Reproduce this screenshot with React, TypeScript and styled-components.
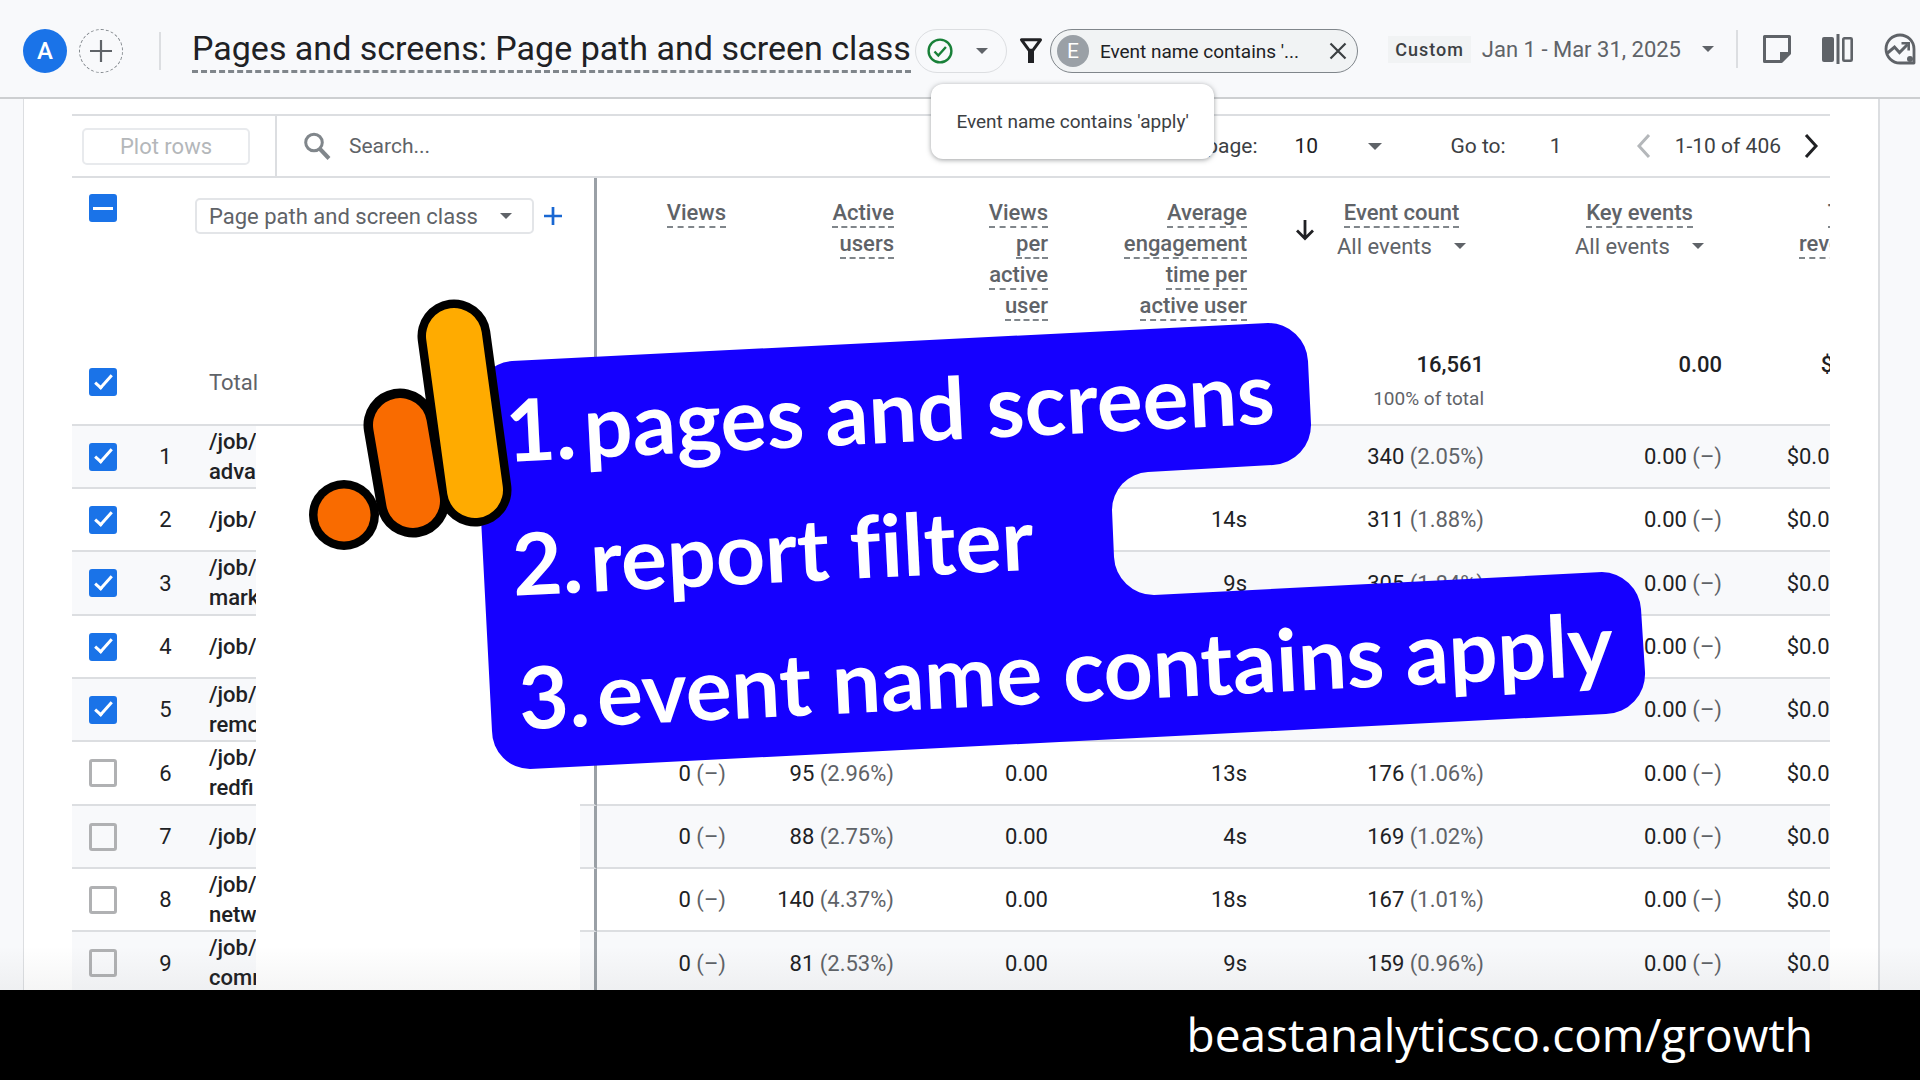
import React from "react";
import styled, { createGlobalStyle, css } from "styled-components";

const ink = "#202124";
const grey = "#5f6368";
const line = "#dcdee1";
const wash = "#f8f9fb";
const blue = "#1a73e8";

const GlobalStyle = createGlobalStyle`
  *, *::before, *::after { box-sizing: border-box; }
  body { margin: 0; background: ${wash}; }
  button, input, select { font: inherit; color: inherit; margin: 0; }
`;

const Page = styled.div`
  display: flex;
  flex-direction: column;
  position: relative;
  height: 100vh;
  overflow: hidden;
  font-family: Roboto, "Liberation Sans", sans-serif;
  font-size: 21px;
  line-height: 31px;
  color: ${ink};
`;

/* ---------- header ---------- */

const Header = styled.header`
  display: flex;
  align-items: center;
  flex: none;
  padding: 29px 4px 24px 23px;
  background: ${wash};
  border-bottom: 2px solid #cdcfd1;
  white-space: nowrap;
`;

const Round = styled.button<{ $dashed?: boolean }>`
  display: grid;
  place-items: center;
  flex: none;
  width: 44px;
  height: 44px;
  padding: 0;
  border-radius: 50%;
  font-size: 24px;
  font-weight: 500;
  color: #fff;
  background: ${blue};
  border: 0;
  ${(p) =>
    p.$dashed &&
    css`
      margin-left: 12px;
      background: none;
      color: ${grey};
      border: 1px dashed #80868b;
    `}
`;

const Rule = styled.span<{ $left: number; $right: number }>`
  flex: none;
  width: 2px;
  height: 38px;
  margin: 0 ${(p) => p.$right}px 0 ${(p) => p.$left}px;
  background: ${line};
`;

const Title = styled.h1`
  margin: 0;
  padding-bottom: 3px;
  border-bottom: 3px dashed #80868b;
  font-size: 34px;
  line-height: 38px;
  font-weight: 400;
`;

const StatusButton = styled.button`
  display: flex;
  align-items: center;
  justify-content: space-between;
  flex: none;
  width: 92px;
  height: 44px;
  margin: 0 12px 0 4px;
  padding: 0 18px 0 11px;
  border: 1px solid ${line};
  border-radius: 22px;
  background: none;
`;

const FilterArea = styled.div`
  display: flex;
  align-items: center;
  gap: 7px;
  position: relative;
`;

const Chip = styled.div`
  display: flex;
  align-items: center;
  width: 308px;
  height: 44px;
  padding: 0 10px 0 6px;
  border: 1px solid #80868b;
  border-radius: 22px;
  background: #f1f3f4;
  font-size: 19px;
`;

const ChipLetter = styled.span`
  display: grid;
  place-items: center;
  width: 32px;
  height: 32px;
  margin-right: 11px;
  border-radius: 50%;
  background: #9aa0a6;
  color: #fff;
  font-size: 21px;
`;

const PlainButton = styled.button`
  display: inline-flex;
  align-items: center;
  flex: none;
  padding: 0;
  border: 0;
  background: none;
`;

const ChipText = styled.span`
  flex: 1;
`;

const Tooltip = styled.div`
  position: absolute;
  top: 55px;
  right: 144px;
  z-index: 3;
  padding: 22px 25px;
  border-radius: 12px;
  background: #fff;
  box-shadow: 0 1px 5px rgba(60, 64, 67, 0.5);
  font-size: 19px;
  color: #3c4043;
`;

const HeaderEnd = styled.div`
  display: flex;
  align-items: center;
  margin-left: auto;
  padding-bottom: 4px;
`;

const DateButton = styled(PlainButton)`
  gap: 21px;
  color: ${grey};
  font-size: 22px;
`;

const Tag = styled.span`
  margin-right: 11px;
  padding: 0 7px;
  background: #f1f3f4;
  font-size: 18px;
  line-height: 27px;
  font-weight: 500;
  letter-spacing: 1px;
  color: #3c4043;
`;

const HeaderIcons = styled.div`
  display: flex;
  gap: 30px;
`;

/* ---------- report card ---------- */

const Main = styled.main`
  flex: 1;
  min-height: 0;
  position: relative;
  overflow: hidden;
  padding: 0 40px 0 23px;
`;

const Card = styled.section`
  min-height: 100%;
  padding: 15px 48px 0;
  background: #fff;
  border: solid ${line};
  border-width: 0 2px 0 1px;
`;

const Toolbar = styled.div`
  display: flex;
  align-items: center;
  height: 64px;
  border: solid ${line};
  border-width: 2px 0;
`;

const PlotCell = styled.div`
  display: flex;
  align-items: center;
  align-self: stretch;
  padding: 0 25px 0 10px;
  border-right: 2px solid ${line};
`;

const PlotButton = styled.button`
  width: 168px;
  height: 37px;
  padding: 0;
  border: 2px solid #e8eaed;
  border-radius: 5px;
  background: none;
  font-size: 22px;
  line-height: 31px;
  color: #b4b7ba;
`;

const SearchLabel = styled.label`
  display: flex;
  align-items: center;
  gap: 18px;
  flex: 1;
  padding-left: 26px;
  color: ${grey};
`;

const SearchInput = styled.input`
  flex: 1;
  min-width: 0;
  padding: 0;
  border: 0;
  outline: 0;
  background: none;
  &::placeholder { color: ${grey}; opacity: 1; }
`;

const Pager = styled.div`
  display: flex;
  align-items: center;
  padding-right: 11px;
  color: #3c4043;
`;

const SelectBox = styled.span`
  display: inline-flex;
  align-items: center;
  & select {
    appearance: none;
    padding: 0;
    border: 0;
    outline: 0;
    background: none;
  }
  & svg { flex: none; pointer-events: none; }
`;

const RowsSelect = styled(SelectBox)`
  gap: 50px;
  margin: 0 68px 0 37px;
  color: ${ink};
`;

const GoInput = styled.input`
  width: 86px;
  padding: 0;
  margin-left: 44px;
  border: 0;
  outline: 0;
  background: none;
`;

const Range = styled.span`
  margin: 0 23px 0 24px;
`;

/* ---------- table ---------- */

const TableClip = styled.div`
  overflow: hidden;
`;

const Table = styled.table`
  width: calc(100% + 63px);
  table-layout: fixed;
  border-collapse: separate;
  border-spacing: 0;
  font-size: 22px;
`;

const Col = styled.col<{ $w?: number }>`
  width: ${(p) => (p.$w ? `${p.$w}px` : "auto")};
`;

const HeadRow = styled.tr`
  height: 162px;
  vertical-align: top;
`;

const TotalRow = styled.tr`
  height: 86px;
  & > * { border-bottom: 2px solid ${line}; }
`;

const Row = styled.tr`
  height: 63px;
  & > * { border-bottom: 2px solid ${line}; }
  &:nth-child(odd) { background: ${wash}; }
  &:nth-child(3n) { height: 64px; }
`;

const Cell = styled.td`
  padding: 0 16px 0 0;
  text-align: right;
  white-space: nowrap;
`;

const CheckCell = styled.td<{ $top?: boolean }>`
  padding: ${(p) => (p.$top ? "16px 0 0 17px" : "0 0 0 17px")};
  line-height: 0;
`;

const NumberCell = styled.td`
  padding: 0;
  text-align: center;
`;

const PathCell = styled.th`
  padding: 0 0 0 12px;
  overflow: hidden;
  text-align: left;
  font-weight: 500;
  white-space: nowrap;
  line-height: 30px;
`;

const TotalCell = styled.th`
  padding: 0 0 0 12px;
  text-align: left;
  font-weight: 400;
  color: ${grey};
`;

const Blank = styled.td`
  padding: 0;
  background: #fff;
  tr > & { border-color: #fff; }
`;

const Edge = styled.td`
  padding: 0;
  border-right: 3px solid #9aa0a6;
`;

const MetricHead = styled.th`
  padding: 19px 16px 0 0;
  text-align: right;
  font-weight: 500;
  white-space: nowrap;
  color: ${grey};
`;

const Dotted = styled.span`
  padding-bottom: 1px;
  border-bottom: 2px dashed #80868b;
`;

const EventHead = styled.div`
  display: flex;
  justify-content: flex-end;
  gap: 22px;
`;

const EventStack = styled.div`
  display: flex;
  flex-direction: column;
  align-items: center;
  padding-right: 18px;
`;

const EventSelect = styled(SelectBox)`
  gap: 22px;
  height: 36px;
  font-weight: 400;
`;

const SortButton = styled(PlainButton)`
  align-items: flex-end;
  height: 44px;
  color: ${ink};
`;

const DimensionCell = styled.th`
  padding: 20px 0 0;
  text-align: left;
  font-weight: 400;
  color: ${grey};
`;

const DimensionRow = styled.div`
  display: flex;
  align-items: center;
  gap: 10px;
  margin-left: -2px;
`;

const DimensionSelect = styled(SelectBox)`
  justify-content: space-between;
  width: 339px;
  height: 36px;
  padding: 0 20px 0 12px;
  border: 2px solid #e3e5e8;
  border-radius: 5px;
`;

const AddDimension = styled(PlainButton)`
  color: #1967d2;
`;

const Share = styled.span`
  color: ${grey};
`;

const TotalValue = styled.div`
  font-weight: 500;
  line-height: 34px;
`;

const TotalNote = styled.div`
  font-size: 19px;
  line-height: 34px;
  color: ${grey};
`;

const Check = styled.input<{ $mixed?: boolean }>`
  appearance: none;
  display: inline-grid;
  place-items: center;
  width: 28px;
  height: 28px;
  border: 3px solid #b0b1b3;
  border-radius: 3px;
  background: transparent;
  &:checked {
    border-color: ${blue};
    background: ${blue};
  }
  &:checked::after {
    content: "";
    ${(p) =>
      p.$mixed
        ? css`
            width: 20px;
            height: 3px;
            background: #fff;
          `
        : css`
            width: 9px;
            height: 18px;
            margin-top: -5px;
            border: solid #fff;
            border-width: 0 3px 3px 0;
            transform: rotate(42deg);
          `}
  }
`;

const Fade = styled.div`
  position: absolute;
  inset: auto 0 0 0;
  height: 44px;
  background: linear-gradient(rgba(60, 64, 67, 0), rgba(60, 64, 67, 0.05));
`;

/* ---------- annotation sticker ---------- */

const Sticker = styled.aside`
  position: absolute;
  z-index: 4;
  top: 290px;
  left: 300px;
`;

const StickerArt = styled.svg`
  display: block;
`;

const Steps = styled.ol`
  position: absolute;
  top: 72px;
  left: 202px;
  margin: 0;
  padding: 0;
  list-style: none;
  transform: rotate(-2.86deg);
  transform-origin: 0 0;
  font-family: Lato, "Open Sans", sans-serif;
  font-size: 86px;
  line-height: 134px;
  font-weight: 700;
  font-variant-ligatures: none;
  white-space: nowrap;
  color: #fff;
`;

const Step = styled.li`
  display: grid;
  grid-template-columns: 78px auto;
`;

const Footer = styled.footer`
  display: flex;
  align-items: center;
  justify-content: flex-end;
  flex: none;
  height: 90px;
  padding: 0 107px 2px 0;
  background: #000;
`;

const FooterLink = styled.a`
  font-family: "Open Sans", "Noto Sans", sans-serif;
  font-size: 46px;
  line-height: 60px;
  color: #fff;
  text-decoration: none;
`;

/* ---------- icons ---------- */

const Caret = ({ size = 12 }: { size?: number }) => (
  <svg width={size} height={size / 2} viewBox="0 0 12 6" aria-hidden="true">
    <path d="M0 0h12L6 6z" fill={grey} />
  </svg>
);

const Plus = ({ size, width = 2 }: { size: number; width?: number }) => (
  <svg width={size} height={size} viewBox="0 0 20 20" aria-hidden="true">
    <path d="M10 0v20M0 10h20" stroke="currentColor" strokeWidth={width} />
  </svg>
);

const CheckCircle = () => (
  <svg width="26" height="26" viewBox="0 0 26 26" fill="none" stroke="#188038" strokeWidth="2.4" aria-hidden="true">
    <circle cx="13" cy="13" r="11.4" />
    <path d="M7.5 13.5l3.8 4 7.6-8.5" />
  </svg>
);

const Funnel = () => (
  <svg width="24" height="26" viewBox="0 0 24 26" aria-hidden="true">
    <path d="M2.5 1.8h19L14 12.2h-4z" fill="none" stroke={ink} strokeWidth="3" strokeLinejoin="round" />
    <path d="M9 12h6v13H9z" fill={ink} />
  </svg>
);

const Close = () => (
  <svg width="18" height="18" viewBox="0 0 18 18" aria-hidden="true">
    <path d="M1.5 1.5l15 15M16.5 1.5l-15 15" stroke="#3c4043" strokeWidth="2.2" />
  </svg>
);

const Note = () => (
  <svg width="30" height="30" viewBox="0 0 30 30" aria-hidden="true">
    <path d="M2.500 2.500h25v17l-8 8h-17z" fill="none" stroke={grey} strokeWidth="3" strokeLinejoin="round" />
    <path d="M18 28v-10h10z" fill={grey} />
  </svg>
);

const Compare = () => (
  <svg width="32" height="32" viewBox="0 0 32 32" aria-hidden="true">
    <rect x="0" y="4" width="12" height="25" rx="2" fill={grey} />
    <path d="M16 1v30" stroke={grey} strokeWidth="3" />
    <rect x="21.3" y="5.3" width="8.4" height="22.4" rx="1" fill="none" stroke={grey} strokeWidth="2.6" />
  </svg>
);

const Insights = () => (
  <svg width="32" height="32" viewBox="0 0 32 32" fill="none" stroke={grey} aria-hidden="true">
    <path d="M30 16A14 14 0 1 0 16 30h14z" strokeWidth="2.8" strokeLinejoin="round" />
    <path d="M3.500 20l7-6 5 5.500 8-8" strokeWidth="3" />
    <path d="M17.500 10.300h7.200v7.200" strokeWidth="2.6" />
    <circle cx="26" cy="26" r="3" fill={grey} stroke="none" />
  </svg>
);

const Lens = () => (
  <svg width="28" height="28" viewBox="0 0 28 28" fill="none" stroke="#80868b" aria-hidden="true">
    <circle cx="11" cy="10.5" r="8.3" strokeWidth="3" />
    <path d="M17 17l9 9.500" strokeWidth="4" />
  </svg>
);

const Chevron = ({ left }: { left?: boolean }) => (
  <svg width="15" height="24" viewBox="0 0 15 24" fill="none" aria-hidden="true">
    <path d={left ? "M13 1L3 12l10 11" : "M2 1l10 11L2 23"} stroke={left ? "#b4b7ba" : ink} strokeWidth="3" />
  </svg>
);

const SortArrow = () => (
  <svg width="20" height="22" viewBox="0 0 20 22" fill="none" aria-hidden="true">
    <path d="M10 1v18M2 11.500l8 8 8-8" stroke={ink} strokeWidth="2.8" />
  </svg>
);

/* ---------- data ---------- */

type Entry = {
  path: string[];
  views?: string;
  users?: [string, string];
  perUser?: string;
  time?: string;
  events?: [string, string];
  on?: boolean;
};

const rows: Entry[] = [
  { path: ["/job/", "adva"], events: ["340", "(2.05%)"], on: true },
  { path: ["/job/"], time: "14s", events: ["311", "(1.88%)"], on: true },
  { path: ["/job/", "mark"], time: "9s", events: ["305", "(1.84%)"], on: true },
  { path: ["/job/"], on: true },
  { path: ["/job/", "remo"], on: true },
  { path: ["/job/", "redfi"], views: "0", users: ["95", "(2.96%)"], perUser: "0.00", time: "13s", events: ["176", "(1.06%)"] },
  { path: ["/job/"], views: "0", users: ["88", "(2.75%)"], perUser: "0.00", time: "4s", events: ["169", "(1.02%)"] },
  { path: ["/job/", "netw"], views: "0", users: ["140", "(4.37%)"], perUser: "0.00", time: "18s", events: ["167", "(1.01%)"] },
  { path: ["/job/", "comm"], views: "0", users: ["81", "(2.53%)"], perUser: "0.00", time: "9s", events: ["159", "(0.96%)"] },
];

const Metric = ({ lines }: { lines: string[] }) => (
  <MetricHead scope="col">
    {lines.map((l, i) => (
      <React.Fragment key={l}>
        {i > 0 && <br />}
        <Dotted>{l}</Dotted>
      </React.Fragment>
    ))}
  </MetricHead>
);

const EventMetric = ({ name, sorted }: { name: string; sorted?: boolean }) => (
  <MetricHead scope="col">
    <EventHead>
      {sorted && (
        <SortButton aria-label="Sorted descending">
          <SortArrow />
        </SortButton>
      )}
      <EventStack>
        <div>
          <Dotted>{name}</Dotted>
        </div>
        <EventSelect>
          <select aria-label={`${name} filter`}>
            <option>All events</option>
          </select>
          <Caret />
        </EventSelect>
      </EventStack>
    </EventHead>
  </MetricHead>
);

const Value = ({ n, share }: { n?: string; share?: string }) => (
  <Cell>
    {n}
    {n && share && <Share> {share}</Share>}
  </Cell>
);

const Total = ({ value, note }: { value: string; note?: string }) => (
  <Cell>
    <TotalValue>{value}</TotalValue>
    <TotalNote>{note ?? "\u00a0"}</TotalNote>
  </Cell>
);

export default function App() {
  return (
    <Page>
      <GlobalStyle />
      <Header>
        <Round aria-label="All users">A</Round>
        <Round $dashed aria-label="Add comparison">
          <Plus size={22} />
        </Round>
        <Rule $left={36} $right={31} />
        <Title>Pages and screens: Page path and screen class</Title>
        <StatusButton aria-label="Report status">
          <CheckCircle />
          <Caret />
        </StatusButton>
        <FilterArea>
          <Funnel />
          <Chip>
            <ChipLetter>E</ChipLetter>
            <ChipText>Event name contains '...</ChipText>
            <PlainButton aria-label="Remove filter">
              <Close />
            </PlainButton>
          </Chip>
          <Tooltip role="tooltip">Event name contains 'apply'</Tooltip>
        </FilterArea>
        <HeaderEnd>
          <Tag>Custom</Tag>
          <DateButton>
            Jan 1 - Mar 31, 2025
            <Caret />
          </DateButton>
          <Rule $left={22} $right={24} />
          <HeaderIcons>
            <PlainButton aria-label="Notes"><Note /></PlainButton>
            <PlainButton aria-label="Edit comparisons"><Compare /></PlainButton>
            <PlainButton aria-label="Insights"><Insights /></PlainButton>
          </HeaderIcons>
        </HeaderEnd>
      </Header>

      <Main>
        <Card>
          <Toolbar>
            <PlotCell>
              <PlotButton disabled>Plot rows</PlotButton>
            </PlotCell>
            <SearchLabel>
              <Lens />
              <SearchInput type="text" placeholder="Search..." aria-label="Search" />
            </SearchLabel>
            <Pager>
              <label htmlFor="rows">Rows per page:</label>
              <RowsSelect>
                <select id="rows">
                  <option>10</option>
                </select>
                <Caret size={14} />
              </RowsSelect>
              <label htmlFor="goto">Go to:</label>
              <GoInput id="goto" type="text" defaultValue="1" />
              <PlainButton aria-label="Previous page"><Chevron left /></PlainButton>
              <Range>1-10 of 406</Range>
              <PlainButton aria-label="Next page"><Chevron /></PlainButton>
            </Pager>
          </Toolbar>

          <TableClip>
            <Table>
              <colgroup>
                <Col $w={62} />
                <Col $w={63} />
                <Col $w={59} />
                <Col />
                <Col $w={17} />
                <Col $w={145} />
                <Col $w={168} />
                <Col $w={154} />
                <Col $w={199} />
                <Col $w={237} />
                <Col $w={238} />
                <Col $w={155} />
              </colgroup>
              <thead>
                <HeadRow>
                  <CheckCell $top>
                    <Check type="checkbox" $mixed defaultChecked aria-label="Select all rows" />
                  </CheckCell>
                  <NumberCell />
                  <DimensionCell colSpan={2} scope="col">
                    <DimensionRow>
                      <DimensionSelect>
                        <select aria-label="Dimension">
                          <option>Page path and screen class</option>
                        </select>
                        <Caret />
                      </DimensionSelect>
                      <AddDimension aria-label="Add dimension">
                        <Plus size={18} width={3} />
                      </AddDimension>
                    </DimensionRow>
                  </DimensionCell>
                  <Edge />
                  <Metric lines={["Views"]} />
                  <Metric lines={["Active", "users"]} />
                  <Metric lines={["Views", "per", "active", "user"]} />
                  <Metric lines={["Average", "engagement", "time per", "active user"]} />
                  <EventMetric name="Event count" sorted />
                  <EventMetric name="Key events" />
                  <Metric lines={["Total", "revenue"]} />
                </HeadRow>
                <TotalRow>
                  <CheckCell>
                    <Check type="checkbox" defaultChecked aria-label="Select total" />
                  </CheckCell>
                  <NumberCell />
                  <TotalCell colSpan={2} scope="row">Total</TotalCell>
                  <Edge />
                  <Cell colSpan={4} />
                  <Total value="16,561" note="100% of total" />
                  <Total value="0.00" />
                  <Total value="$0.00" />
                </TotalRow>
              </thead>
              <tbody>
                {rows.map((r, i) => (
                  <Row key={i}>
                    <CheckCell>
                      <Check type="checkbox" defaultChecked={r.on} aria-label={`Select row ${i + 1}`} />
                    </CheckCell>
                    <NumberCell>{i + 1}</NumberCell>
                    <PathCell scope="row">
                      {r.path[0]}
                      {r.path[1] && <br />}
                      {r.path[1]}
                    </PathCell>
                    <Blank />
                    <Edge />
                    <Value n={r.views} share="(–)" />
                    <Value n={r.users?.[0]} share={r.users?.[1]} />
                    <Value n={r.perUser} />
                    <Value n={r.time} />
                    <Value n={r.events?.[0]} share={r.events?.[1]} />
                    <Value n="0.00" share="(–)" />
                    <Value n="$0.00" share="(–)" />
                  </Row>
                ))}
              </tbody>
            </Table>
          </TableClip>
        </Card>
        <Fade />
      </Main>

      <Sticker>
        <StickerArt width="1360" height="490" viewBox="300 290 1360 490" aria-hidden="true">
          <path
            fill="#1500ff"
            d="M512 361L1268 323A40 40 0 0 1 1308 361L1311 424A40 40 0 0 1 1273 465L1148 472A38 38 0 0 0 1112 510L1114 557A40 40 0 0 0 1154 595L1602 572A40 40 0 0 1 1641 609L1645 672A40 40 0 0 1 1606 714L530 769A38 38 0 0 1 492 731L475 402A40 40 0 0 1 512 361Z"
          />
          <g strokeLinecap="round" fill="none">
            <path d="M344 515h.01" stroke="#000" strokeWidth="70" />
            <path d="M400 425L413 501" stroke="#000" strokeWidth="73" />
            <path d="M454 336L475 490" stroke="#000" strokeWidth="73" />
            <path d="M344 515h.01" stroke="#f96b00" strokeWidth="53" />
            <path d="M400 425L413 501" stroke="#f96b00" strokeWidth="54" />
            <path d="M454 336L475 490" stroke="#ffab00" strokeWidth="56" />
          </g>
        </StickerArt>
        <Steps>
          <Step><span>1.</span><span>pages and screens</span></Step>
          <Step><span>2.</span><span>report filter</span></Step>
          <Step><span>3.</span><span>event name contains apply</span></Step>
        </Steps>
      </Sticker>

      <Footer>
        <FooterLink href="#growth">beastanalyticsco.com/growth</FooterLink>
      </Footer>
    </Page>
  );
}
